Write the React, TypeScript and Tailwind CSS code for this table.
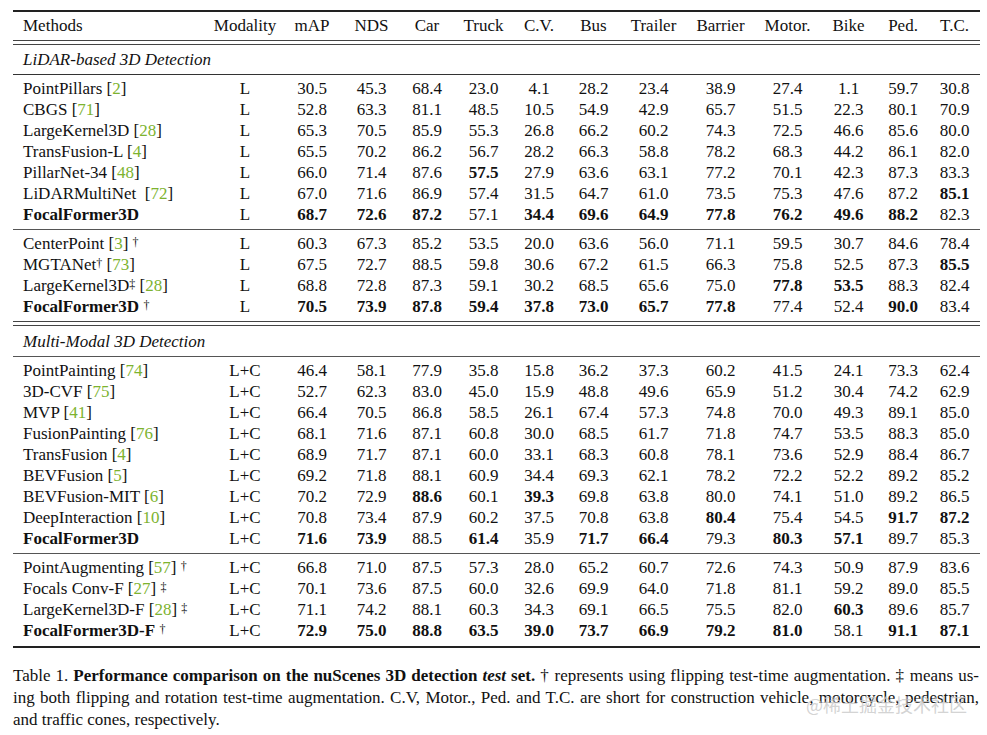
import React from "react";

type Method = {
  n: string;
  b?: boolean;
  pre?: string;
  cite?: string;
  post?: string;
  gap?: boolean;
};

type Row = { m: Method; mod: string; v: string[] };

const cols = "grid grid-cols-[197px_70px_64px_55px_56px_57px_54px_55px_65px_69px_65px_57px_52px_51px]";

const heads = ["mAP", "NDS", "Car", "Truck", "C.V.", "Bus", "Trailer", "Barrier", "Motor.", "Bike", "Ped.", "T.C."];

const r = (m: Method, mod: string, s: string): Row => ({ m, mod, v: s.split(" ") });

const lidarA: Row[] = [
  r({ n: "PointPillars", cite: "2" }, "L", "30.5 45.3 68.4 23.0 4.1 28.2 23.4 38.9 27.4 1.1 59.7 30.8"),
  r({ n: "CBGS", cite: "71" }, "L", "52.8 63.3 81.1 48.5 10.5 54.9 42.9 65.7 51.5 22.3 80.1 70.9"),
  r({ n: "LargeKernel3D", cite: "28" }, "L", "65.3 70.5 85.9 55.3 26.8 66.2 60.2 74.3 72.5 46.6 85.6 80.0"),
  r({ n: "TransFusion-L", cite: "4" }, "L", "65.5 70.2 86.2 56.7 28.2 66.3 58.8 78.2 68.3 44.2 86.1 82.0"),
  r({ n: "PillarNet-34", cite: "48" }, "L", "66.0 71.4 87.6 *57.5 27.9 63.6 63.1 77.2 70.1 42.3 87.3 83.3"),
  r({ n: "LiDARMultiNet", cite: "72", gap: true }, "L", "67.0 71.6 86.9 57.4 31.5 64.7 61.0 73.5 75.3 47.6 87.2 *85.1"),
  r({ n: "FocalFormer3D", b: true }, "L", "*68.7 *72.6 *87.2 57.1 *34.4 *69.6 *64.9 *77.8 *76.2 *49.6 *88.2 82.3"),
];

const lidarB: Row[] = [
  r({ n: "CenterPoint", cite: "3", post: "†" }, "L", "60.3 67.3 85.2 53.5 20.0 63.6 56.0 71.1 59.5 30.7 84.6 78.4"),
  r({ n: "MGTANet", pre: "†", cite: "73" }, "L", "67.5 72.7 88.5 59.8 30.6 67.2 61.5 66.3 75.8 52.5 87.3 *85.5"),
  r({ n: "LargeKernel3D", pre: "‡", cite: "28" }, "L", "68.8 72.8 87.3 59.1 30.2 68.5 65.6 75.0 *77.8 *53.5 88.3 82.4"),
  r({ n: "FocalFormer3D", b: true, post: "†" }, "L", "*70.5 *73.9 *87.8 *59.4 *37.8 *73.0 *65.7 *77.8 77.4 52.4 *90.0 83.4"),
];

const multiA: Row[] = [
  r({ n: "PointPainting", cite: "74" }, "L+C", "46.4 58.1 77.9 35.8 15.8 36.2 37.3 60.2 41.5 24.1 73.3 62.4"),
  r({ n: "3D-CVF", cite: "75" }, "L+C", "52.7 62.3 83.0 45.0 15.9 48.8 49.6 65.9 51.2 30.4 74.2 62.9"),
  r({ n: "MVP", cite: "41" }, "L+C", "66.4 70.5 86.8 58.5 26.1 67.4 57.3 74.8 70.0 49.3 89.1 85.0"),
  r({ n: "FusionPainting", cite: "76" }, "L+C", "68.1 71.6 87.1 60.8 30.0 68.5 61.7 71.8 74.7 53.5 88.3 85.0"),
  r({ n: "TransFusion", cite: "4" }, "L+C", "68.9 71.7 87.1 60.0 33.1 68.3 60.8 78.1 73.6 52.9 88.4 86.7"),
  r({ n: "BEVFusion", cite: "5" }, "L+C", "69.2 71.8 88.1 60.9 34.4 69.3 62.1 78.2 72.2 52.2 89.2 85.2"),
  r({ n: "BEVFusion-MIT", cite: "6" }, "L+C", "70.2 72.9 *88.6 60.1 *39.3 69.8 63.8 80.0 74.1 51.0 89.2 86.5"),
  r({ n: "DeepInteraction", cite: "10" }, "L+C", "70.8 73.4 87.9 60.2 37.5 70.8 63.8 *80.4 75.4 54.5 *91.7 *87.2"),
  r({ n: "FocalFormer3D", b: true }, "L+C", "*71.6 *73.9 88.5 *61.4 35.9 *71.7 *66.4 79.3 *80.3 *57.1 89.7 85.3"),
];

const multiB: Row[] = [
  r({ n: "PointAugmenting", cite: "57", post: "†" }, "L+C", "66.8 71.0 87.5 57.3 28.0 65.2 60.7 72.6 74.3 50.9 87.9 83.6"),
  r({ n: "Focals Conv-F", cite: "27", post: "‡" }, "L+C", "70.1 73.6 87.5 60.0 32.6 69.9 64.0 71.8 81.1 59.2 89.0 85.5"),
  r({ n: "LargeKernel3D-F", cite: "28", post: "‡" }, "L+C", "71.1 74.2 88.1 60.3 34.3 69.1 66.5 75.5 82.0 *60.3 89.6 85.7"),
  r({ n: "FocalFormer3D-F", b: true, post: "†" }, "L+C", "*72.9 *75.0 *88.8 *63.5 *39.0 *73.7 *66.9 *79.2 *81.0 58.1 *91.1 *87.1"),
];

function Sup({ c }: { c: string }) {
  return <sup className="text-[12px] font-normal relative -top-[3px]">{c}</sup>;
}

function MethodCell({ m }: { m: Method }) {
  return (
    <div className="pl-[10px] whitespace-pre">
      <span className={m.b ? "font-bold" : ""}>{m.n}</span>
      {m.pre && <Sup c={m.pre} />}
      {m.cite && (
        <>
          {m.gap ? "  " : " "}[<span className="text-[#7db32f]">{m.cite}</span>]
        </>
      )}
      {m.post && (
        <>
          {" "}
          <Sup c={m.post} />
        </>
      )}
    </div>
  );
}

function DataRow({ row }: { row: Row }) {
  return (
    <div className={`${cols} h-[21px] items-center`}>
      <MethodCell m={row.m} />
      <div className="text-center">{row.mod}</div>
      {row.v.map((x, i) => (
        <div key={i} className={`text-center ${x.startsWith("*") ? "font-bold" : ""}`}>
          {x.replace("*", "")}
        </div>
      ))}
    </div>
  );
}

function Block({ rows, last }: { rows: Row[]; last?: boolean }) {
  return (
    <div className={last ? "pt-[3px] pb-[5px]" : "pt-[3px] pb-[4px]"}>
      {rows.map((row, i) => (
        <DataRow key={i} row={row} />
      ))}
    </div>
  );
}

function DoubleRule() {
  return (
    <div className="flex flex-col gap-[3px]">
      <div className="h-px bg-[#444]" />
      <div className="h-px bg-[#444]" />
    </div>
  );
}

export default function App() {
  return (
    <div className="relative w-[987px] h-[735px] bg-white text-[#111] font-['Liberation_Serif','Times_New_Roman',serif] text-[17px] leading-[21px] pt-[10px] pl-[13px]">
      <div className="w-[967px]">
        <div className="h-[1.5px] bg-[#222]" />
        <div className={`${cols} h-[28.5px] items-center`}>
          <div className="pl-[10px]">Methods</div>
          <div className="text-center">Modality</div>
          {heads.map((h) => (
            <div key={h} className="text-center">{h}</div>
          ))}
        </div>
        <DoubleRule />
        <div className="h-[29px] flex items-center pl-[10px] italic">LiDAR-based 3D Detection</div>
        <div className="h-px bg-[#333]" />
        <Block rows={lidarA} />
        <div className="h-px bg-[#555]" />
        <Block rows={lidarB} />
        <DoubleRule />
        <div className="h-[30px] flex items-center pl-[10px] italic">Multi-Modal 3D Detection</div>
        <div className="h-px bg-[#555]" />
        <Block rows={multiA} />
        <div className="h-px bg-[#555]" />
        <Block rows={multiB} last />
        <div className="h-[1.5px] bg-[#222]" />
      </div>

      <div className="w-[966px] mt-[17px] leading-[22px]">
        <div className="text-justify [text-align-last:justify]">
          Table 1. <b>Performance comparison on the nuScenes 3D detection <i>test</i> set.</b> † represents using flipping test-time augmentation. ‡ means us-
        </div>
        <div className="text-justify [text-align-last:justify]">
          ing both flipping and rotation test-time augmentation. C.V, Motor., Ped. and T.C. are short for construction vehicle, motorcycle, pedestrian,
        </div>
        <div>and traffic cones, respectively.</div>
      </div>

      <div className="absolute left-[806px] top-[694px] text-[18px] text-[#c8c8c8]/80 font-['Noto_Sans_CJK_SC',sans-serif] whitespace-nowrap">
        @稀土掘金技术社区
      </div>
    </div>
  );
}
